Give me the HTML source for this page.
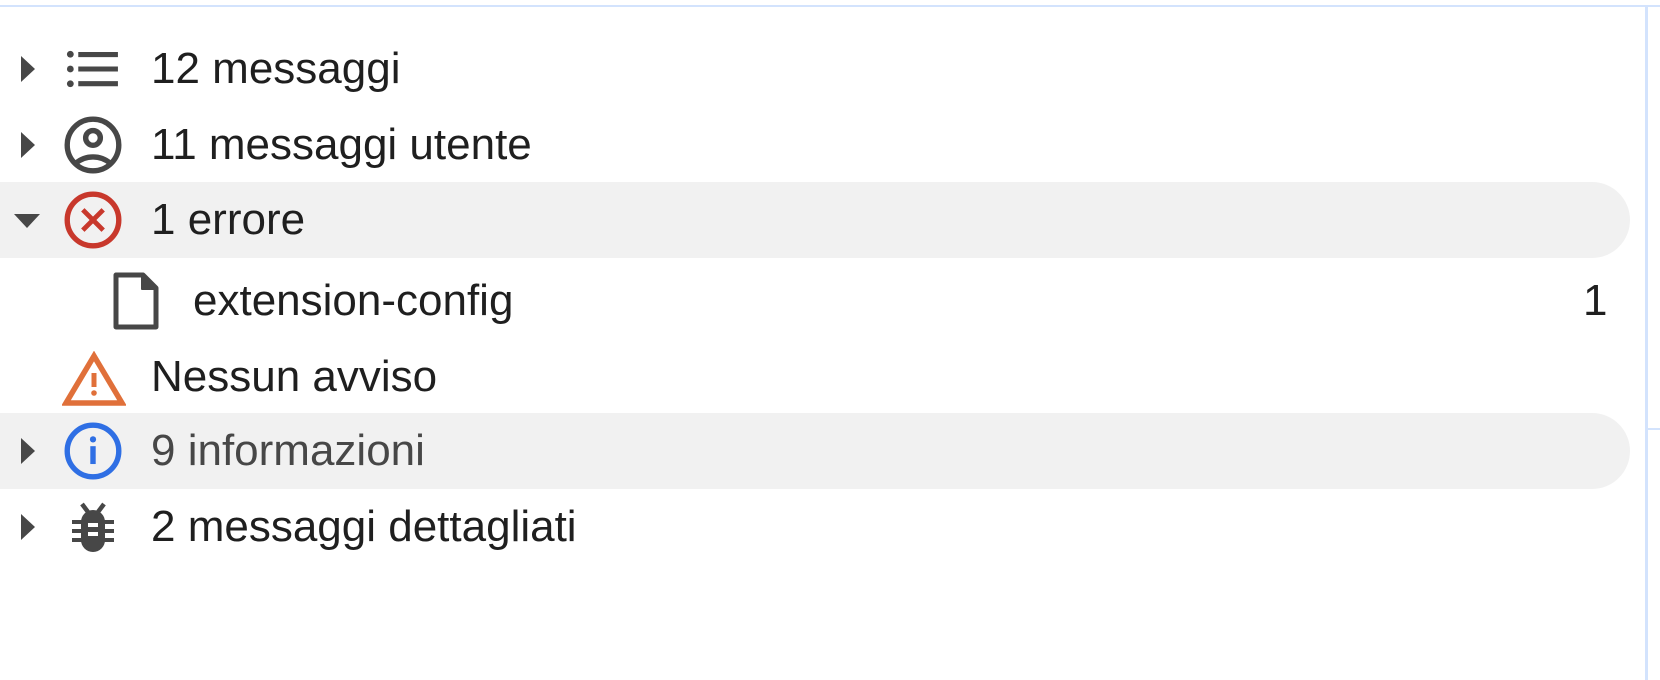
<!DOCTYPE html>
<html><head><meta charset="utf-8"><style>
html,body{margin:0;padding:0;width:1660px;height:680px;background:#fff;overflow:hidden}
body{position:relative;font-family:"Liberation Sans",Arial,sans-serif;color:#1f1f1f}
.top{position:absolute;left:0;top:5px;width:1660px;height:2px;background:#d3e3fd}
.vl{position:absolute;left:1645px;top:5px;width:3px;height:675px;background:#d3e3fd}
.hs{position:absolute;left:1646px;top:428px;width:14px;height:2px;background:#d3e3fd}
.hl{position:absolute;left:0;width:1630px;height:76px;background:#f1f1f1;border-radius:0 38px 38px 0}
.row{position:absolute;left:0;height:76px;width:1640px}
.tri{position:absolute;left:21px;top:25px;width:0;height:0;border-top:13px solid transparent;border-bottom:13px solid transparent;border-left:14px solid #474747}
.tri.down{left:14px;top:32px;border-left:13px solid transparent;border-right:13px solid transparent;border-top:14px solid #474747;border-bottom:0}
.ic{position:absolute;left:59px;top:4px;width:68px;height:68px}
.t{position:absolute;left:151px;top:0;line-height:76px;font-size:44px;white-space:nowrap}
</style></head><body>
<div class="top"></div><div class="vl"></div><div class="hs"></div>
<div class="hl" style="top:182px"></div>
<div class="hl" style="top:413px"></div>

<div class="row" style="top:31px"><div class="tri"></div>
<svg class="ic" viewBox="0 0 24 24" fill="#474747"><circle cx="4" cy="6.8" r="1.2"/><circle cx="4" cy="12" r="1.2"/><circle cx="4" cy="17.2" r="1.2"/><path d="M6.8 6h14v1.8h-14zM6.8 11.1h14v1.8h-14zM6.8 16.3h14v1.8h-14z"/></svg>
<div class="t">12 messaggi</div></div>

<div class="row" style="top:107px"><div class="tri"></div>
<svg class="ic" viewBox="0 0 24 24" fill="none" stroke="#474747" stroke-width="1.9"><circle cx="12" cy="12" r="9.1"/><circle cx="12" cy="9.5" r="2.6"/><path d="M6 18.4c1.6-1.4 3.7-2.2 6-2.2s4.4.8 6 2.2"/></svg>
<div class="t">11 messaggi utente</div></div>

<div class="row" style="top:182px"><div class="tri down"></div>
<svg class="ic" viewBox="0 0 24 24" fill="none" stroke="#c8382c"><circle cx="12" cy="12" r="9.1" stroke-width="1.9"/><path d="M8.4 8.4l7.2 7.2M15.6 8.4l-7.2 7.2" stroke-width="1.7"/></svg>
<div class="t">1 errore</div></div>

<div class="row" style="top:263px">
<svg style="position:absolute;left:112px;top:8px;width:50px;height:60px" viewBox="0 0 50 60" fill="none" stroke="#474747" stroke-width="5" stroke-linejoin="round"><path d="M4 4h27l13 13v39H4z"/><path d="M30 4l14 14H30z" fill="#474747" stroke-width="2"/></svg>
<div class="t" style="left:193px">extension-config</div>
<div class="t" style="left:1583px">1</div></div>

<div class="row" style="top:339px">
<svg style="position:absolute;left:62px;top:12px;width:64px;height:56px" viewBox="0 0 64 56" fill="none"><path d="M32 5L4 52h56z" stroke="#e0703a" stroke-width="5.5" stroke-linejoin="miter"/><rect x="29.5" y="22" width="5" height="14" fill="#e0703a"/><circle cx="32" cy="42" r="2.8" fill="#e0703a"/></svg>
<div class="t">Nessun avviso</div></div>

<div class="row" style="top:413px"><div class="tri"></div>
<svg class="ic" viewBox="0 0 24 24" fill="none"><circle cx="12" cy="12" r="9.1" stroke="#2f6fe4" stroke-width="1.9"/><rect x="11.05" y="10.3" width="1.9" height="6.3" fill="#2f6fe4"/><circle cx="12" cy="7.9" r="1.1" fill="#2f6fe4"/></svg>
<div class="t" style="color:#474747">9 informazioni</div></div>

<div class="row" style="top:489px"><div class="tri"></div>
<svg style="position:absolute;left:71px;top:13px;width:44px;height:52px" viewBox="0 0 44 52" fill="#474747"><path d="M11 2l6 8M33 2l-6 8" stroke="#474747" stroke-width="4.5" fill="none"/><rect x="10" y="8" width="24" height="42" rx="12"/><rect x="17" y="21" width="10" height="4" fill="#fff"/><rect x="17" y="30" width="10" height="4" fill="#fff"/><rect x="1" y="18" width="10" height="4"/><rect x="33" y="18" width="10" height="4"/><rect x="1" y="27" width="10" height="4"/><rect x="33" y="27" width="10" height="4"/><rect x="1" y="36" width="10" height="4"/><rect x="33" y="36" width="10" height="4"/></svg>
<div class="t">2 messaggi dettagliati</div></div>
</body></html>
